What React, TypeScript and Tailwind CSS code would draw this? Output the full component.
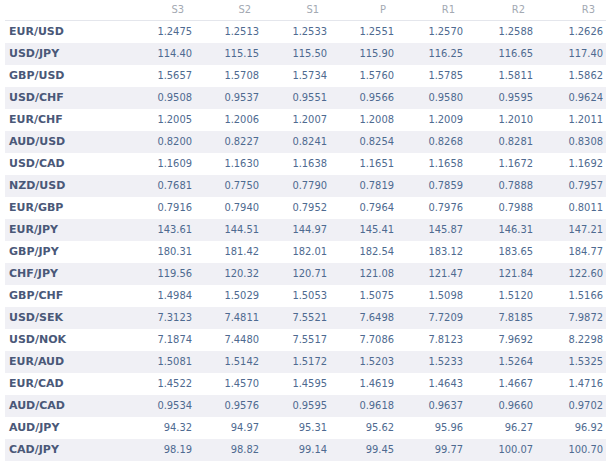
import React from 'react';

const headers = ['S3', 'S2', 'S1', 'P', 'R1', 'R2', 'R3'];

const rows: [string, string[]][] = [
  ['EUR/USD', ['1.2475', '1.2513', '1.2533', '1.2551', '1.2570', '1.2588', '1.2626']],
  ['USD/JPY', ['114.40', '115.15', '115.50', '115.90', '116.25', '116.65', '117.40']],
  ['GBP/USD', ['1.5657', '1.5708', '1.5734', '1.5760', '1.5785', '1.5811', '1.5862']],
  ['USD/CHF', ['0.9508', '0.9537', '0.9551', '0.9566', '0.9580', '0.9595', '0.9624']],
  ['EUR/CHF', ['1.2005', '1.2006', '1.2007', '1.2008', '1.2009', '1.2010', '1.2011']],
  ['AUD/USD', ['0.8200', '0.8227', '0.8241', '0.8254', '0.8268', '0.8281', '0.8308']],
  ['USD/CAD', ['1.1609', '1.1630', '1.1638', '1.1651', '1.1658', '1.1672', '1.1692']],
  ['NZD/USD', ['0.7681', '0.7750', '0.7790', '0.7819', '0.7859', '0.7888', '0.7957']],
  ['EUR/GBP', ['0.7916', '0.7940', '0.7952', '0.7964', '0.7976', '0.7988', '0.8011']],
  ['EUR/JPY', ['143.61', '144.51', '144.97', '145.41', '145.87', '146.31', '147.21']],
  ['GBP/JPY', ['180.31', '181.42', '182.01', '182.54', '183.12', '183.65', '184.77']],
  ['CHF/JPY', ['119.56', '120.32', '120.71', '121.08', '121.47', '121.84', '122.60']],
  ['GBP/CHF', ['1.4984', '1.5029', '1.5053', '1.5075', '1.5098', '1.5120', '1.5166']],
  ['USD/SEK', ['7.3123', '7.4811', '7.5521', '7.6498', '7.7209', '7.8185', '7.9872']],
  ['USD/NOK', ['7.1874', '7.4480', '7.5517', '7.7086', '7.8123', '7.9692', '8.2298']],
  ['EUR/AUD', ['1.5081', '1.5142', '1.5172', '1.5203', '1.5233', '1.5264', '1.5325']],
  ['EUR/CAD', ['1.4522', '1.4570', '1.4595', '1.4619', '1.4643', '1.4667', '1.4716']],
  ['AUD/CAD', ['0.9534', '0.9576', '0.9595', '0.9618', '0.9637', '0.9660', '0.9702']],
  ['AUD/JPY', ['94.32', '94.97', '95.31', '95.62', '95.96', '96.27', '96.92']],
  ['CAD/JPY', ['98.19', '98.82', '99.14', '99.45', '99.77', '100.07', '100.70']],
];

const cols = 'grid grid-cols-[119px_71px_67px_68px_67px_69px_70px_70px]';

export default function App() {
  return (
    <div className="w-[606px] h-[463px] bg-white pl-[5px] overflow-hidden text-[11px] font-['DejaVu_Sans_Condensed','DejaVu_Sans',sans-serif]">
      {/* header */}
      <div className={`${cols} h-[21px] items-center border-b border-[#e4e6ec] text-[#a3a9b2]`}>
        <div />
        {headers.map((h) => (
          <div key={h} className="text-right pr-[11px]">
            {h}
          </div>
        ))}
      </div>

      {/* pivot rows */}
      {rows.map(([pair, vals], i) => (
        <div
          key={pair}
          className={`${cols} h-[22px] items-center ${i % 2 === 1 ? 'bg-[#f0f0f5]' : 'bg-white'}`}
        >
          <div className="pl-[4px] font-bold text-[#4a5878] font-['DejaVu_Sans',sans-serif]">{pair}</div>
          {vals.map((v, j) => (
            <div key={j} className="text-right pr-[3px] text-[#4e6a90]">
              {v}
            </div>
          ))}
        </div>
      ))}
    </div>
  );
}
